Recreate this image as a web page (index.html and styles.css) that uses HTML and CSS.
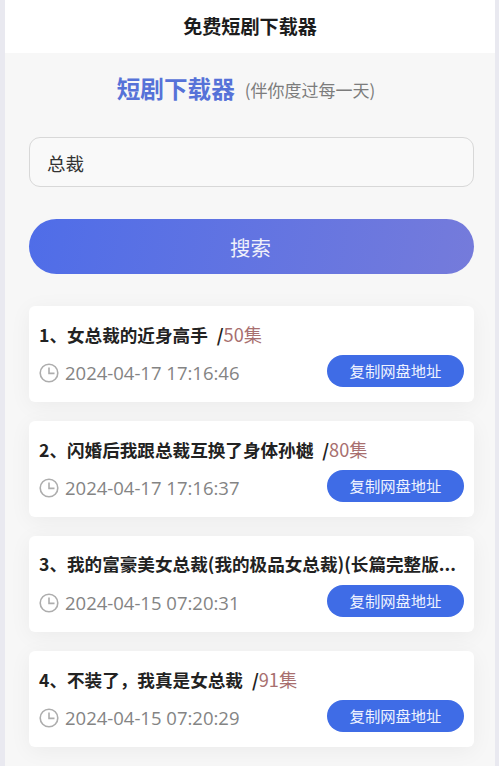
FILE: index.html
```html
<!DOCTYPE html>
<html lang="zh-CN">
<head>
    <meta charset="UTF-8">
    <meta name="viewport" content="width=device-width, initial-scale=1.0">
    <title>免费短剧下载器</title>
    <link rel="stylesheet" href="styles.css">
</head>
<body>
    <div class="page">
        <header class="topbar">免费短剧下载器</header>
        <main class="content">
            <div class="heading">
                <span class="heading-main">短剧下载器</span>
                <span class="heading-sub">(伴你度过每一天)</span>
            </div>
            <input class="search-input" type="text" value="总裁">
            <button class="search-button">搜索</button>
            <ul class="results">
                <li class="card">
                    <p class="card-title">1、女总裁的近身高手 /<span class="episodes">50集</span></p>
                    <div class="card-row">
                        <span class="card-time">
                            <svg class="clock" viewBox="0 0 20 20"><circle cx="10" cy="10" r="8.8"/><path d="M10 4.5V10.4H15.5"/></svg>
                            2024-04-17 17:16:46
                        </span>
                        <button class="copy-button">复制网盘地址</button>
                    </div>
                </li>
                <li class="card">
                    <p class="card-title">2、闪婚后我跟总裁互换了身体孙樾 /<span class="episodes">80集</span></p>
                    <div class="card-row">
                        <span class="card-time">
                            <svg class="clock" viewBox="0 0 20 20"><circle cx="10" cy="10" r="8.8"/><path d="M10 4.5V10.4H15.5"/></svg>
                            2024-04-17 17:16:37
                        </span>
                        <button class="copy-button">复制网盘地址</button>
                    </div>
                </li>
                <li class="card">
                    <p class="card-title">3、我的富豪美女总裁(我的极品女总裁)(长篇完整版...</p>
                    <div class="card-row">
                        <span class="card-time">
                            <svg class="clock" viewBox="0 0 20 20"><circle cx="10" cy="10" r="8.8"/><path d="M10 4.5V10.4H15.5"/></svg>
                            2024-04-15 07:20:31
                        </span>
                        <button class="copy-button">复制网盘地址</button>
                    </div>
                </li>
                <li class="card">
                    <p class="card-title">4、不装了，我真是女总裁 /<span class="episodes">91集</span></p>
                    <div class="card-row">
                        <span class="card-time">
                            <svg class="clock" viewBox="0 0 20 20"><circle cx="10" cy="10" r="8.8"/><path d="M10 4.5V10.4H15.5"/></svg>
                            2024-04-15 07:20:29
                        </span>
                        <button class="copy-button">复制网盘地址</button>
                    </div>
                </li>
            </ul>
        </main>
    </div>
</body>
</html>
```

FILE: styles.css
```css
html, body {
    margin: 0;
    padding: 0;
    height: 100%;
    overflow: hidden;
}
body {
    background-color: #e9e9f0;
    font-family: "Noto Sans CJK SC", "Noto Sans", sans-serif;
    color: #222;
}
.page {
    margin: 0 4px 0 5px;
    min-height: 100%;
    background-color: #f7f7f7;
}
.topbar {
    height: 53px;
    line-height: 53px;
    background-color: #fff;
    text-align: center;
    font-size: 19.1px;
    font-weight: 700;
    color: #1c1c1c;
}
.content {
    padding: 17px 21px 0 24px;
}
.heading {
    height: 36px;
    display: flex;
    justify-content: center;
    align-items: center;
    gap: 10px;
    padding-right: 11px;
}
.heading-main {
    font-size: 23.6px;
    font-weight: 700;
    color: #5672d8;
}
.heading-sub {
    font-size: 17px;
    color: #7c7c7c;
    padding-top: 3px;
}
.search-input {
    display: block;
    box-sizing: border-box;
    width: 100%;
    height: 50px;
    margin-top: 31px;
    padding: 2px 17px 0;
    border: 1.5px solid #d8d8d8;
    border-radius: 11px;
    background-color: #f9f9f9;
    font-family: inherit;
    font-size: 18.5px;
    color: #333;
}
.search-button {
    display: block;
    width: 100%;
    height: 55px;
    margin-top: 32px;
    padding: 0 2px 0 0;
    border: none;
    border-radius: 28px;
    background: linear-gradient(100deg, #4f6de8, #757bdb);
    color: #f0f0fa;
    font-family: inherit;
    font-size: 20.5px;
}
.results {
    list-style: none;
    margin: 32px 0 0;
    padding: 0;
    display: flex;
    flex-direction: column;
    gap: 19px;
}
.card {
    box-sizing: border-box;
    height: 96px;
    padding: 14px 10px 0;
    background-color: #fff;
    border-radius: 6px;
    box-shadow: 0 4px 22px rgba(0, 0, 0, 0.05);
}
.card-title {
    margin: 0;
    height: 28px;
    line-height: 28px;
    font-size: 17.6px;
    font-weight: 700;
    word-spacing: 5px;
    color: #222;
    white-space: nowrap;
}
.episodes {
    font-size: 18.2px;
    font-weight: 400;
    color: #a86f6f;
}
.card-row {
    display: flex;
    justify-content: space-between;
    align-items: center;
    margin-top: 7px;
}
.card-time {
    display: flex;
    align-items: center;
    gap: 6px;
    padding-top: 3px;
    font-family: "Open Sans", "Noto Sans CJK SC", sans-serif;
    font-size: 18.5px;
    color: #848484;
}
.clock {
    width: 20px;
    height: 20px;
    fill: none;
    stroke: #adadad;
    stroke-width: 1.6;
}
.copy-button {
    width: 137px;
    height: 32px;
    padding: 0 0 2px;
    border: none;
    border-radius: 16px;
    background-color: #3f6ce6;
    color: #eef2ff;
    font-family: inherit;
    font-size: 15.3px;
}
```
